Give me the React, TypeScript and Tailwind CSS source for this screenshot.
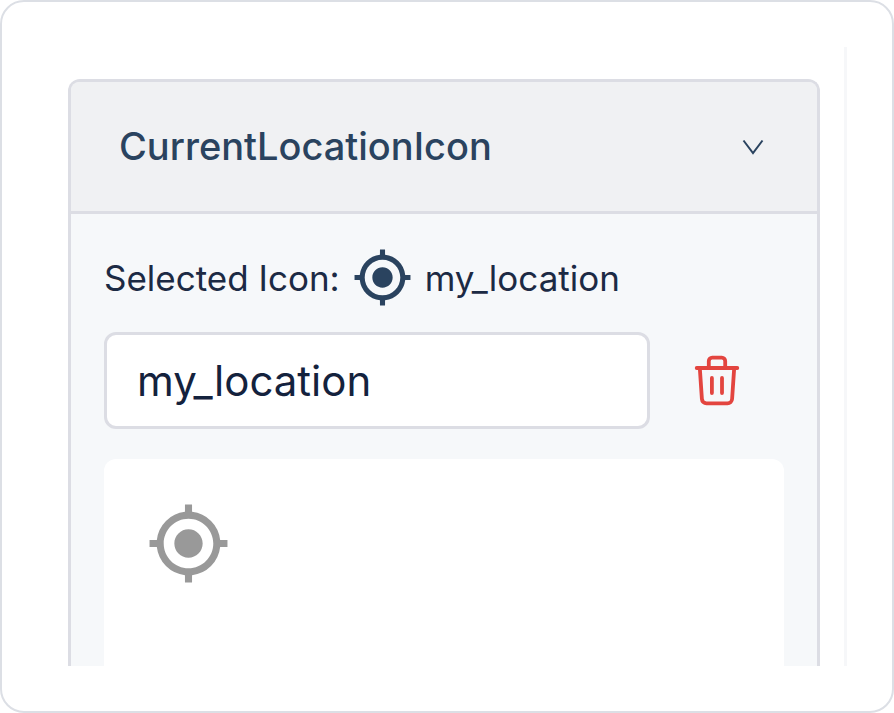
import { useState } from "react";

type IconProps = { className?: string };

function MyLocationIcon({ className }: IconProps) {
  return (
    <svg viewBox="0 0 24 24" fill="currentColor" className={className} aria-hidden="true">
      <path d="M12 8c-2.21 0-4 1.79-4 4s1.79 4 4 4 4-1.79 4-4-1.79-4-4-4zm8.94 3A8.994 8.994 0 0 0 13 3.06V1h-2v2.06A8.994 8.994 0 0 0 3.06 11H1v2h2.06A8.994 8.994 0 0 0 11 20.94V23h2v-2.06A8.994 8.994 0 0 0 20.94 13H23v-2h-2.06zM12 19c-3.87 0-7-3.13-7-7s3.13-7 7-7 7 3.13 7 7-3.13 7-7 7z" />
    </svg>
  );
}

function TrashIcon({ className }: IconProps) {
  return (
    <svg
      viewBox="0 0 48 52"
      fill="none"
      stroke="currentColor"
      strokeWidth="3.8"
      strokeLinecap="round"
      strokeLinejoin="round"
      className={className}
      aria-hidden="true"
    >
      <path d="M3.7 13h40.6" />
      <path d="M15.800 12.500V6a3.400 3.400 0 0 1 3.400-3.400h9.600A3.400 3.400 0 0 1 32.200 6v6.500" />
      <path d="M6.800 13l2.100 31a4.600 4.600 0 0 0 4.600 4.300h21a4.600 4.600 0 0 0 4.600-4.300l2.100-31" />
      <path d="M18.900 23v15M29 23v15" />
    </svg>
  );
}

function ChevronIcon({ className }: IconProps) {
  return (
    <svg viewBox="0 0 24 24" fill="none" stroke="currentColor" strokeWidth="2" className={className} aria-hidden="true">
      <path d="M2.500 5.500L12 18l9.500-12.500" />
    </svg>
  );
}

const icons = ["my_location"];

export default function App() {
  const [open, setOpen] = useState(true);
  const [query, setQuery] = useState("my_location");
  const [selected, setSelected] = useState("my_location");

  const matches = icons.filter((name) => name.includes(query));

  return (
    <div className="flex min-h-screen flex-col rounded-3xl border-2 border-[#dcdfe5] bg-white p-[45px] font-['Inter',sans-serif]">
      <div className="flex flex-1 flex-col border-r-3 border-[#f6f7f9] pt-8 pr-6 pl-[21px]">
        <section className="flex flex-1 flex-col rounded-t-xl border-3 border-b-0 border-[#dcdde4] bg-[#f6f8fa]">
          <button
            type="button"
            aria-expanded={open}
            onClick={() => setOpen(!open)}
            className="flex items-center justify-between rounded-t-lg border-b-3 border-[#dcdde4] bg-[#f0f1f3] py-10 pr-[52px] pl-12 text-left text-[#2a435f]"
          >
            <span className="text-[38px] leading-[49px] font-medium">CurrentLocationIcon</span>
            <ChevronIcon className="size-6" />
          </button>

          {open && (
            <div className="flex flex-1 flex-col px-[33px] pt-[33px]">
              <div className="mb-6 flex items-center gap-3 text-[35px] leading-[48px] text-[#1c2a44]">
                <span>Selected Icon:</span>
                <MyLocationIcon className="size-[61px] text-[#2a435f]" />
                <span>{selected}</span>
              </div>

              <div className="mb-[30px] flex items-center">
                <input
                  type="text"
                  aria-label="Icon name"
                  value={query}
                  onChange={(e) => setQuery(e.target.value)}
                  className="h-[97px] min-w-0 flex-1 rounded-xl border-3 border-[#dcdde4] bg-white px-[30px] text-[42px] text-[#14223d] outline-none"
                />
                <button
                  type="button"
                  aria-label="Remove icon"
                  onClick={() => setQuery("")}
                  className="flex w-[134px] justify-center text-[#e3453f]"
                >
                  <TrashIcon className="h-[52px] w-12" />
                </button>
              </div>

              <div className="flex flex-1 flex-wrap items-start rounded-t-xl bg-white p-[42px]">
                {matches.map((name) => (
                  <button
                    key={name}
                    type="button"
                    aria-label={name}
                    onClick={() => setSelected(name)}
                    className="text-[#999999]"
                  >
                    <MyLocationIcon className="size-[85px]" />
                  </button>
                ))}
              </div>
            </div>
          )}
        </section>
      </div>
    </div>
  );
}
